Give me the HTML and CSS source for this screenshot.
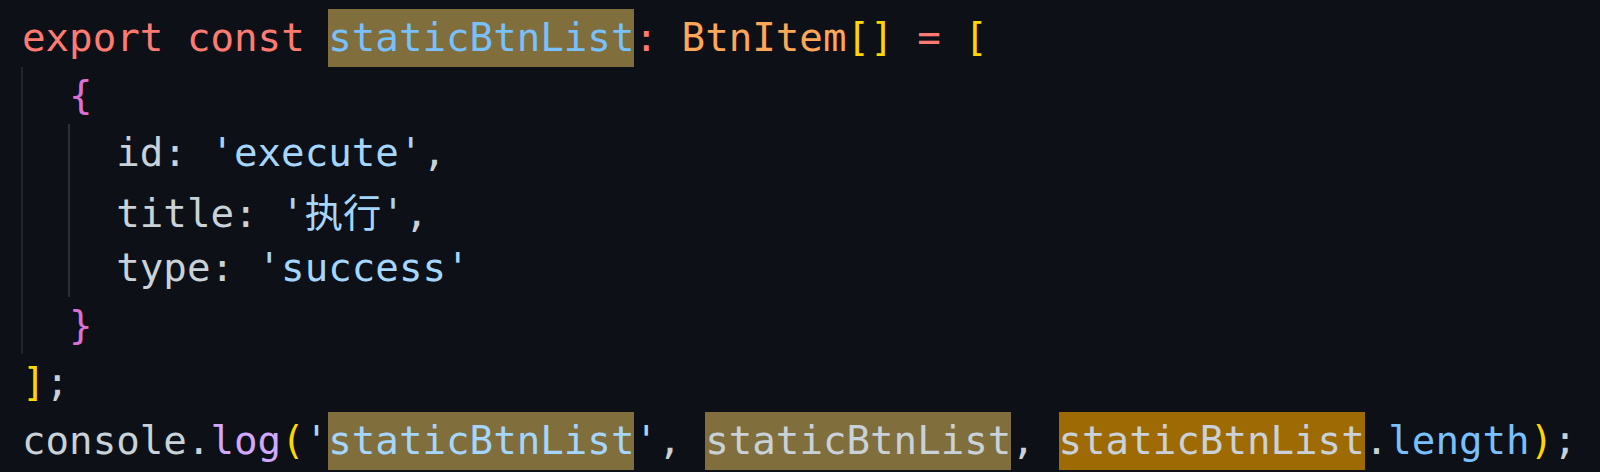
FILE: index.html
```html
<!DOCTYPE html>
<html lang="zh-CN">
<head>
<meta charset="utf-8">
<title>code</title>
<link rel="stylesheet" href="styles.css">
</head>
<body>
<div class="editor">
  <div class="line"><span class="kw">export</span> <span class="kw">const</span> <span class="hl find"><span class="const">staticBtnList</span></span><span class="kw">:</span> <span class="type">BtnItem</span><span class="b1">[]</span> <span class="kw">=</span> <span class="b1">[</span></div>
  <div class="line"><span class="indent g1"></span><span class="b2">{</span></div>
  <div class="line"><span class="indent g1"></span><span class="indent g2"></span>id: <span class="str">'execute'</span>,</div>
  <div class="line"><span class="indent g1"></span><span class="indent g2"></span>title: <span class="str">'<span class="cjk">执行</span>'</span>,</div>
  <div class="line"><span class="indent g1"></span><span class="indent g2"></span>type: <span class="str">'success'</span></div>
  <div class="line"><span class="indent g1"></span><span class="b2">}</span></div>
  <div class="line"><span class="b1">]</span>;</div>
  <div class="line">console.<span class="fn">log</span><span class="b1">(</span><span class="str">'<span class="hl find">staticBtnList</span>'</span>, <span class="hl find">staticBtnList</span>, <span class="hl current">staticBtnList</span>.<span class="const">length</span><span class="b1">)</span>;</div>
</div>
</body>
</html>
```

FILE: styles.css
```css
html, body {
  margin: 0;
  padding: 0;
  background: #0d1117;
}

.editor {
  width: 1600px;
  height: 472px;
  box-sizing: border-box;
  padding: 9px 0 0 22px;
  background: #0d1117;
  color: #c9d1d9;
  font-family: "DejaVu Sans Mono", "Liberation Mono", "Noto Sans CJK SC", monospace;
  font-size: 39.13px;
  overflow: hidden;
}

.line {
  height: 57.57px;
  line-height: 57.57px;
  white-space: pre;
}

.indent {
  display: inline-block;
  vertical-align: top;
  width: 2ch;
  height: 57.57px;
}

.indent.g1 {
  box-shadow: inset 2px 0 0 #21262d;
  margin-left: -1px;
  padding-left: 1px;
}

.indent.g2 {
  box-shadow: inset 2px 0 0 #2b3038;
  margin-left: -1px;
  padding-left: 1px;
}

.hl {
  display: inline-block;
  vertical-align: top;
  height: 57.57px;
}

.hl.find {
  background: #806e3c;
}

.hl.current {
  background: #9e6a03;
}

.kw { color: #ff7b72; }
.const { color: #79c0ff; }
.type { color: #ffa657; }
.str { color: #a5d6ff; }
.fn { color: #d2a8ff; }
.b1 { color: #ffd700; }
.b2 { color: #da70d6; }

.cjk {
  font-family: "Noto Sans CJK SC", sans-serif;
  font-size: 38.3px;
}
```
